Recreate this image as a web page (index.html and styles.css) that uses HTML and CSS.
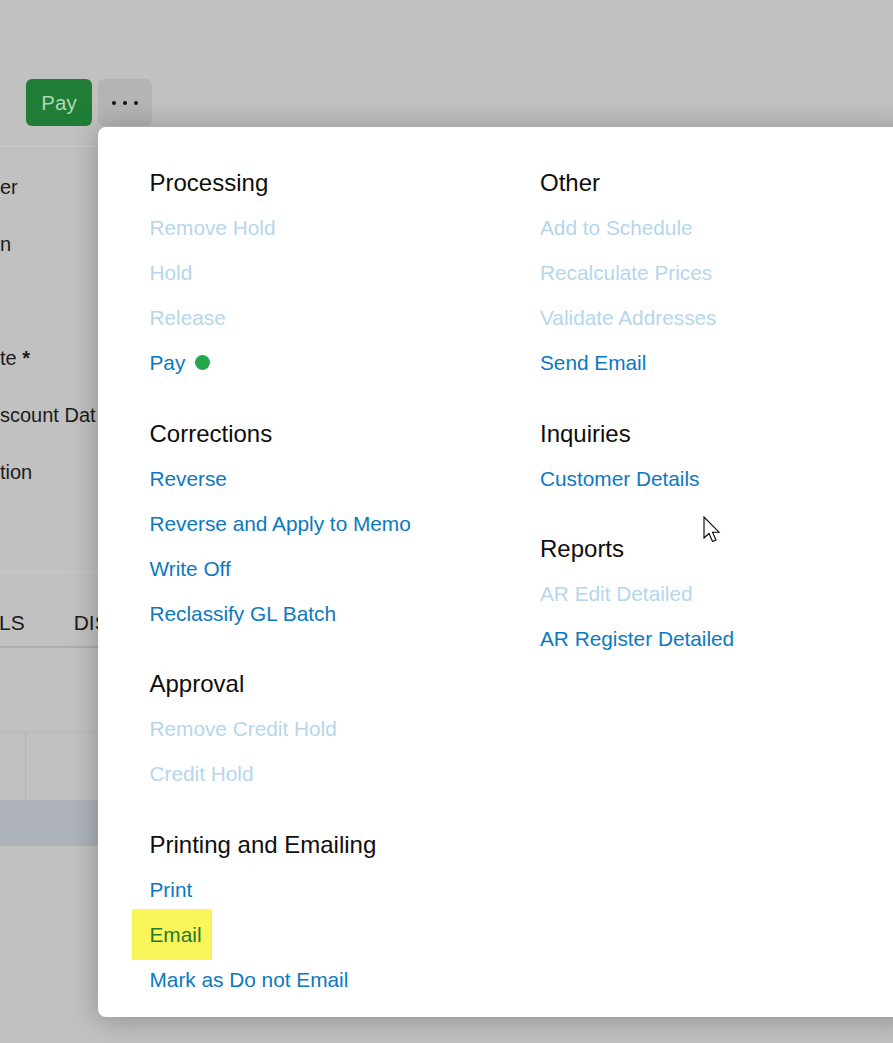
FILE: index.html
```html
<!DOCTYPE html>
<html>
<head>
<meta charset="utf-8">
<link rel="stylesheet" href="styles.css">
</head>
<body>
<div class="page">
  <div class="toolbar">
    <button class="btn-pay">Pay</button>
    <button class="btn-more" aria-label="More">
      <svg width="30" height="8" viewBox="0 0 30 8"><circle cx="4" cy="4" r="2" fill="#111"/><circle cx="15" cy="4" r="2" fill="#111"/><circle cx="26" cy="4" r="2" fill="#111"/></svg>
    </button>
  </div>
  <div class="form">
    <div class="frow">er</div>
    <div class="frow">n</div>
    <div class="frow"></div>
    <div class="frow">te <b>*</b></div>
    <div class="frow">scount Dat</div>
    <div class="frow">tion</div>
  </div>
  <div class="tabs">
    <span class="tab">LS</span>
    <span class="tab tab2">DIS</span>
  </div>
  <div class="tbar"></div>
  <div class="thead"><div class="tcell"></div><div class="tcell wide"></div></div>
  <div class="trow"></div>
</div>

<div class="menu">
  <div class="col">
    <div class="sec">
      <div class="hdr">Processing</div>
      <div class="item dis">Remove Hold</div>
      <div class="item dis">Hold</div>
      <div class="item dis">Release</div>
      <div class="item">Pay <span class="dot"></span></div>
    </div>
    <div class="sec">
      <div class="hdr">Corrections</div>
      <div class="item">Reverse</div>
      <div class="item">Reverse and Apply to Memo</div>
      <div class="item">Write Off</div>
      <div class="item">Reclassify GL Batch</div>
    </div>
    <div class="sec">
      <div class="hdr">Approval</div>
      <div class="item dis">Remove Credit Hold</div>
      <div class="item dis">Credit Hold</div>
    </div>
    <div class="sec">
      <div class="hdr">Printing and Emailing</div>
      <div class="item">Print</div>
      <div class="item hl">Email</div>
      <div class="item">Mark as Do not Email</div>
    </div>
  </div>
  <div class="col">
    <div class="sec">
      <div class="hdr">Other</div>
      <div class="item dis">Add to Schedule</div>
      <div class="item dis">Recalculate Prices</div>
      <div class="item dis">Validate Addresses</div>
      <div class="item">Send Email</div>
    </div>
    <div class="sec">
      <div class="hdr">Inquiries</div>
      <div class="item">Customer Details</div>
    </div>
    <div class="sec">
      <div class="hdr">Reports</div>
      <div class="item dis">AR Edit Detailed</div>
      <div class="item">AR Register Detailed</div>
    </div>
  </div>
</div>

<svg class="cursor" width="20" height="28" viewBox="0 0 20 28">
  <path d="M1 1 L1 22 L6 17.5 L9.5 25.5 L13 24 L9.5 16.2 L16 16.2 Z" fill="#fff" stroke="#000" stroke-width="1.1" stroke-linejoin="miter"/>
</svg>
</body>
</html>
```

FILE: styles.css
```css
html, body {
  margin: 0;
  padding: 0;
}
body {
  background: #c1c1c1;
  width: 893px;
  height: 1043px;
  overflow: hidden;
  position: relative;
  font-family: "Liberation Sans", Arial, sans-serif;
}
.page {
  width: 893px;
}
.toolbar {
  display: flex;
  gap: 6px;
  padding: 79px 0 0 26px;
  height: 47px;
}
.btn-pay {
  width: 66px;
  height: 47px;
  border: none;
  border-radius: 6px;
  background: #1f7d36;
  color: #b3d6b6;
  font-family: "Liberation Sans", Arial, sans-serif;
  font-size: 20.5px;
  padding: 0;
}
.btn-more {
  width: 54px;
  height: 47px;
  border: none;
  border-radius: 6px;
  background: #b4b4b4;
  padding: 0;
  display: flex;
  align-items: center;
  justify-content: center;
}
.form {
  margin-top: 20px;
  border-top: 1px solid #cbcbcb;
  padding-top: 12px;
  height: 413px;
  box-sizing: border-box;
}
.frow {
  height: 57px;
  line-height: 57px;
  font-size: 20px;
  color: #1b1b1b;
}
.frow b {
  font-weight: bold;
}
.tabs {
  margin-top: 12px;
  height: 77px;
  border-top: 1px solid #c9c9c9;
  border-bottom: 2px solid #adadad;
  display: flex;
  align-items: center;
  padding-top: 27px;
  font-size: 21px;
  color: #1b1b1b;
  box-sizing: border-box;
}
.tab {
  margin-left: -1px;
}
.tab2 {
  margin-left: 49px;
}
.tbar {
  height: 84px;
  border-bottom: 1px solid #b9b9b9;
}
.thead {
  display: flex;
  height: 67px;
}
.tcell {
  width: 25px;
  border-right: 1px solid #b3b3b3;
}
.tcell.wide {
  width: 200px;
  border-right: none;
}
.trow {
  height: 46px;
  background: #adb3b9;
}

.menu {
  position: absolute;
  left: 98px;
  top: 127px;
  width: 820px;
  height: 890px;
  background: #fff;
  border-radius: 8px;
  box-shadow: 0 2px 28px rgba(0, 0, 0, 0.28);
  box-sizing: border-box;
  padding: 33px 0 0 51.5px;
  display: grid;
  grid-template-columns: 390.5px 390.5px;
  align-items: start;
}
.col {
  display: flex;
  flex-direction: column;
  gap: 25.5px;
}
.sec {
  display: flex;
  flex-direction: column;
}
.hdr {
  height: 45px;
  line-height: 45px;
  font-size: 24px;
  color: #0e0e0e;
}
.item {
  height: 45px;
  line-height: 45px;
  font-size: 20.8px;
  color: #0b79c1;
  display: flex;
  align-items: center;
}
.item.dis {
  color: #b5d6ec;
}
.dot {
  display: inline-block;
  width: 15px;
  height: 15px;
  border-radius: 50%;
  background: #22a84a;
  margin-left: 10px;
}
.item.hl {
  width: fit-content;
  margin: -3px 0 -3px -18px;
  padding: 3px 10px 3px 18px;
  background: #fbf55c;
  color: #247a2c;
}
.cursor {
  position: absolute;
  left: 703px;
  top: 516px;
}
```
